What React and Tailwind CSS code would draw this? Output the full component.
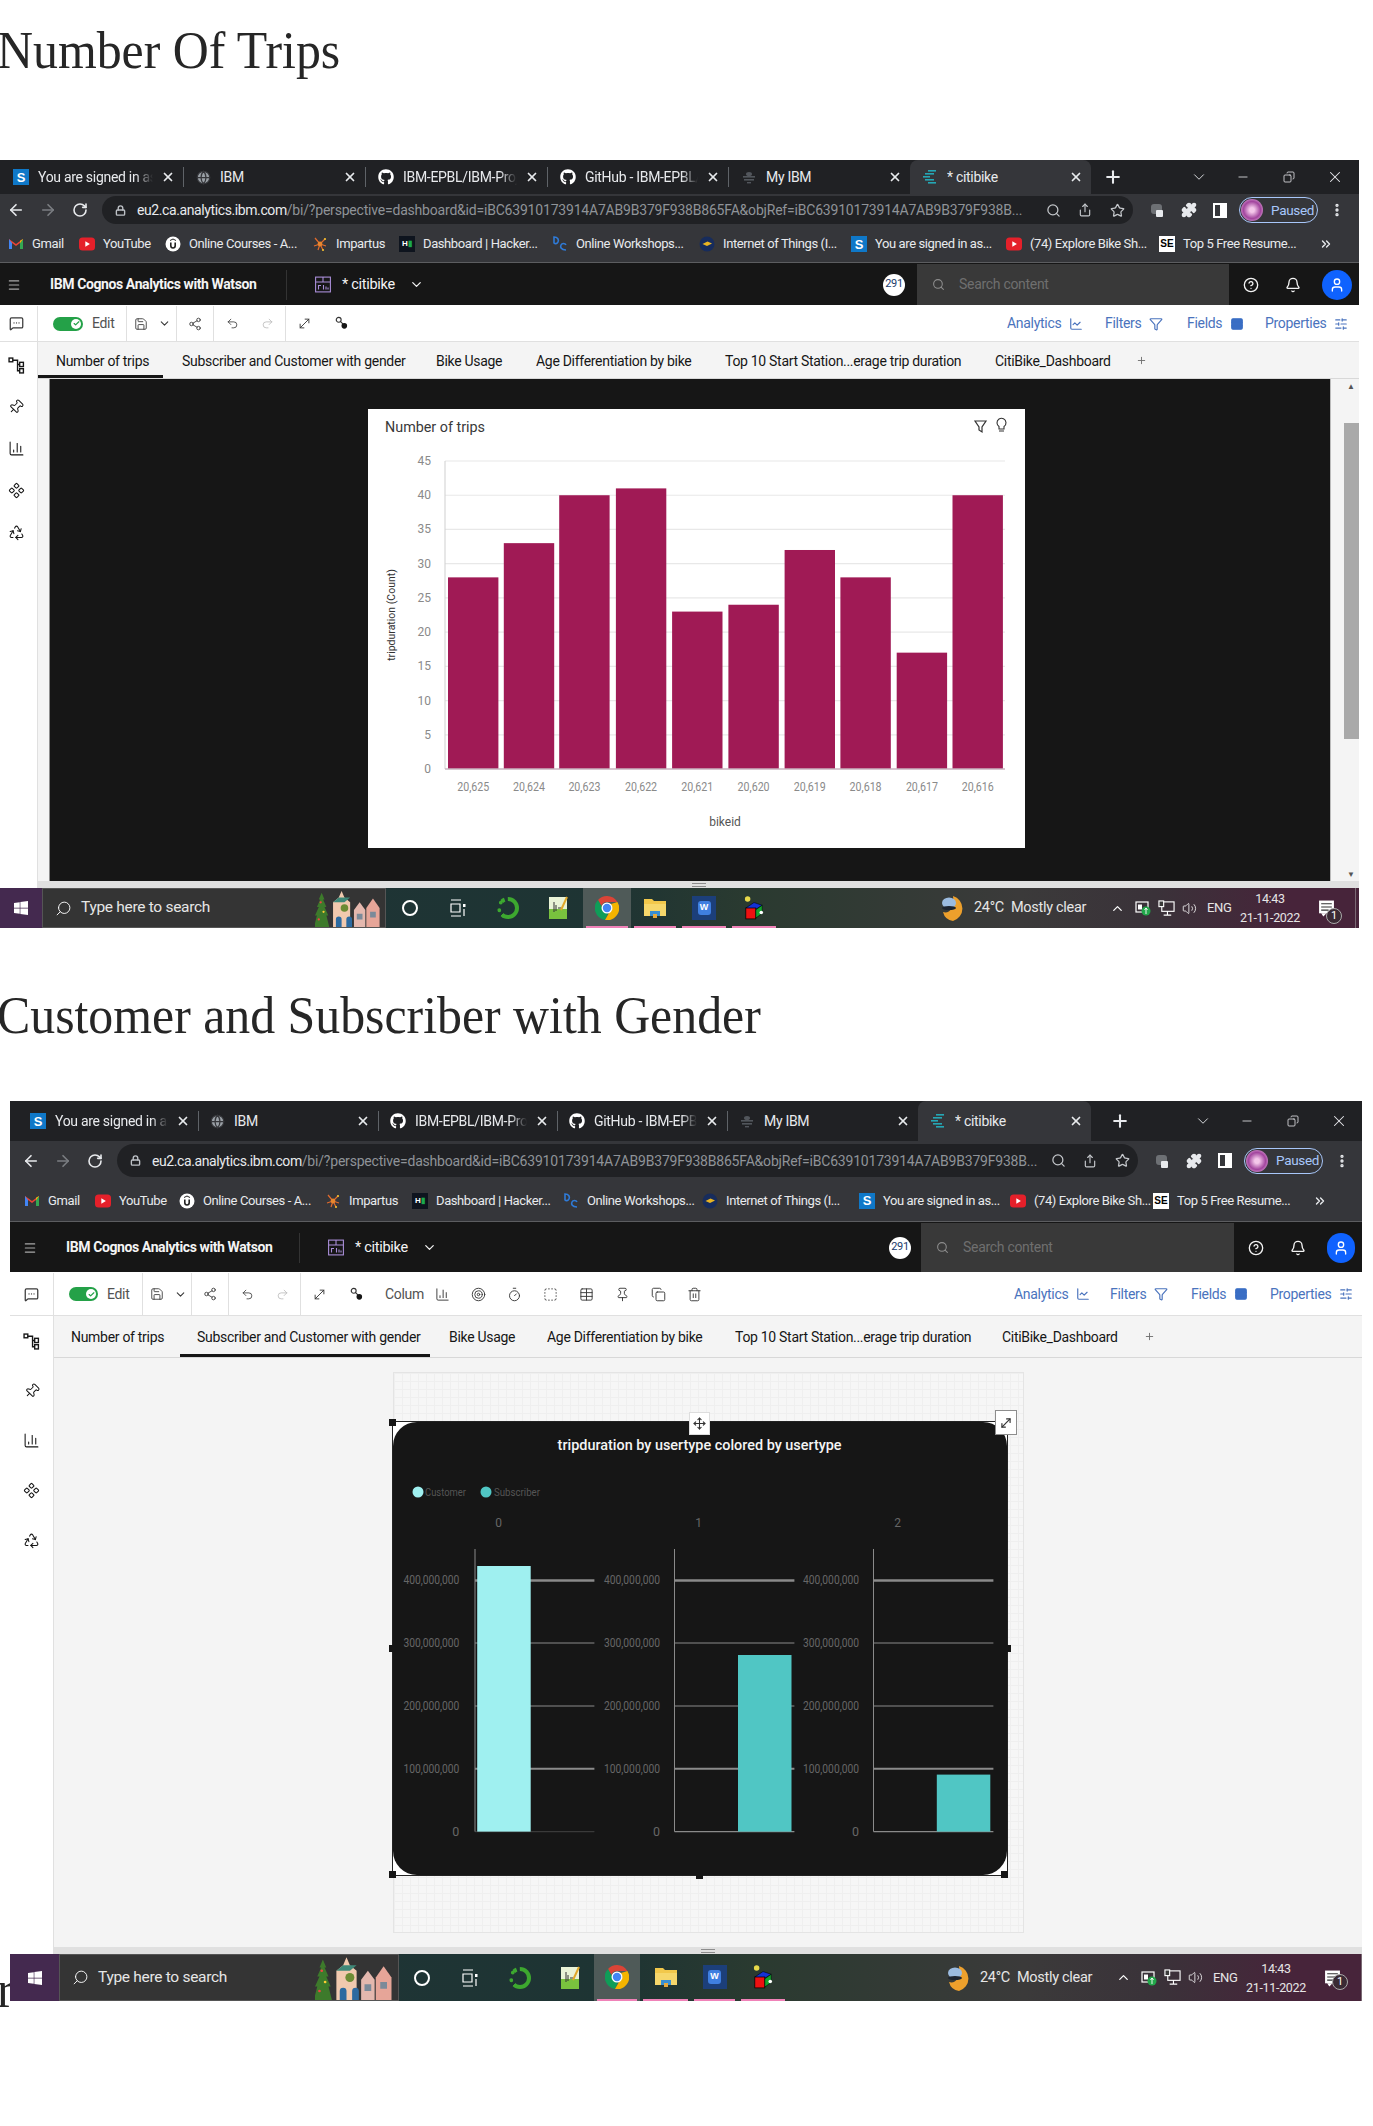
import React from "react";
import { ArrowLeft, ArrowRight, RotateCw, Lock, Search, Share, Star, Puzzle, MoreVertical, Menu, ChevronDown, ChevronUp, HelpCircle, Bell, User, MessageSquareMore, Save, Share2, Undo2, Redo2, MoveDiagonal, Pin, BarChart3, Component, Recycle, LineChart, Funnel, Rows3, SlidersHorizontal, Plus, X, Minus, Copy, Trash2, Table, BoxSelect, Target, Timer, Volume2, Move, Globe, ChevronsRight, Check } from "lucide-react";
import { FaGithub, FaWindows } from "react-icons/fa";

const ui = "font-['Roboto',sans-serif] tracking-[-0.3px]";

function Slot({ c = "", children }) {
  return <div className={`flex flex-none items-center ${c}`}>{children}</div>;
}

function SFav({ c = "" }) {
  return <span className={`flex h-4 w-4 flex-none items-center justify-center bg-[#0f78c8] text-[13px] font-bold leading-none text-white font-['Liberation_Sans',sans-serif] ${c}`}>S</span>;
}
function Yt() {
  return (
    <svg viewBox="0 0 16 16" className="h-4 w-4 flex-none">
      <rect x="0" y="1.5" width="16" height="13" rx="3.5" fill="#e5202a" />
      <path d="M6.3 5.2v5.6l4.6-2.8z" fill="#fff" />
    </svg>
  );
}
function Gmail() {
  return (
    <svg viewBox="0 0 16 16" className="h-4 w-4 flex-none">
      <path d="M1 3v10h3V7l4 3 4-3v6h3V3l-7 5z" fill="#ea4335" />
      <path d="M1 3v10h3V7z" fill="#4285f4" />
      <path d="M12 7v6h3V3z" fill="#34a853" />
      <path d="M12 4.8V7l3-4z" fill="#fbbc04" />
    </svg>
  );
}
function Udemy() {
  return (
    <svg viewBox="0 0 16 16" className="h-4 w-4 flex-none">
      <circle cx="8" cy="8" r="7.5" fill="#fff" />
      <path d="M5 6.5v3.3a3 3 0 0 0 6 0V6.5H9.4v3.3a1.4 1.4 0 0 1-2.8 0V6.5z" fill="#222" />
      <path d="M8 2.5l3 1.6v1L8 3.6 5 5.1v-1z" fill="#222" />
    </svg>
  );
}
function Impartus() {
  return (
    <svg viewBox="0 0 16 16" className="h-4 w-4 flex-none" stroke="#e26b2c" strokeWidth="1.2">
      <path d="M8 8L3 2M8 8l5-5M8 8L2 10M8 8l6 2M8 8l-2 6M8 8l3 6" />
      <circle cx="8" cy="8" r="2.4" fill="#e8862e" stroke="none" />
      <circle cx="13" cy="3" r="1.1" fill="#f4c030" stroke="none" />
      <circle cx="11" cy="14" r="1.1" fill="#f4c030" stroke="none" />
    </svg>
  );
}
function Hacker() {
  return (
    <span className="flex h-4 w-4 flex-none items-center justify-center bg-[#0e141e] text-[8px] font-bold leading-none text-white font-['Liberation_Sans',sans-serif]">H<span className="text-[#1ba94c]">▮</span></span>
  );
}
function Workshops() {
  return (
    <svg viewBox="0 0 16 16" className="h-4 w-4 flex-none" fill="none" strokeWidth="1.6">
      <path d="M2 1c4 0 5 3 4 5s-3 2-4 1z" stroke="#2f7bd8" />
      <path d="M14 9c-1-2-4-2-5 0s0 5 5 5" stroke="#2f7bd8" />
    </svg>
  );
}
function Iot() {
  return (
    <svg viewBox="0 0 16 16" className="h-4 w-4 flex-none">
      <circle cx="8" cy="8" r="7.5" fill="#172c5c" />
      <path d="M3.5 8l5-2.5 4.500 2-5 2.600z" fill="#e9b422" />
    </svg>
  );
}
function SE() {
  return <span className="flex h-4 w-4 flex-none items-center justify-center bg-white text-[10px] font-bold leading-none text-black font-['Liberation_Sans',sans-serif]">SE</span>;
}
function Citi() {
  return (
    <svg viewBox="0 0 16 16" className="h-4 w-4 flex-none" fill="#25a7b5">
      <rect x="6" y="1" width="8" height="1.6" />
      <rect x="3" y="4" width="9" height="1.6" />
      <rect x="1" y="7" width="7" height="1.6" />
      <rect x="3" y="10" width="9" height="1.6" />
      <rect x="6" y="13" width="8" height="1.6" />
    </svg>
  );
}
function Bee() {
  return (
    <svg viewBox="0 0 16 16" className="h-4 w-4 flex-none" fill="#52565c">
      <ellipse cx="8" cy="5" rx="3" ry="2" />
      <rect x="2" y="7" width="12" height="1.6" />
      <rect x="3" y="10" width="10" height="1.6" />
      <rect x="6" y="13" width="4" height="1.4" />
    </svg>
  );
}

function Tab({ w, pl, icon, label, active, sep = true, mask = true }) {
  return (
    <div className={`flex h-full flex-none items-center ${w} ${pl} ${active ? "rounded-t-lg bg-[#35363a]" : ""}`}>
      {icon}
      <span className={`ml-[9px] min-w-0 flex-1 overflow-hidden whitespace-nowrap text-[14px] text-[#e8eaed] ${ui} ${mask ? "[mask-image:linear-gradient(to_right,black_85%,transparent)]" : ""}`}>{label}</span>
      <Slot c="w-[30px] justify-center">
        <X size={14} strokeWidth={3} className="text-[#e8eaed]" />
      </Slot>
      {sep && <span className="h-[20px] w-px flex-none bg-[#5f6368]" />}
    </div>
  );
}

function ChromeTabs({ v }) {
  return (
    <div className={`flex flex-none items-end bg-[#202124] ${v.rows[0]}`}>
      <Tab w={v.tabs[0]} pl={v.tabPl0} icon={<SFav />} label="You are signed in as 1(" />
      <Tab w={v.tabs[1]} pl={v.tabPl} icon={<Globe size={15} className="flex-none fill-[#9aa0a6] text-[#35363a]" />} label="IBM" mask={false} />
      <Tab w={v.tabs[2]} pl={v.tabPl} icon={<FaGithub size={16} className="flex-none text-white" />} label="IBM-EPBL/IBM-Project-1" />
      <Tab w={v.tabs[3]} pl={v.tabPl} icon={<FaGithub size={16} className="flex-none text-white" />} label="GitHub - IBM-EPBL/IBM-Project" />
      <Tab w={v.tabs[4]} pl={v.tabPl} icon={<Bee />} label="My IBM" mask={false} sep={false} />
      <Tab w={v.tabs[5]} pl="pl-[12px]" icon={<Citi />} label="* citibike" mask={false} sep={false} active />
      <div className="flex h-full flex-1 items-center text-[#e8eaed]">
        <Slot c={`justify-center ${v.plus}`}><Plus size={20} strokeWidth={2.5} /></Slot>
        <Slot c={`justify-center ${v.ctrlGap}`}><ChevronDown size={18} strokeWidth={1.2} /></Slot>
        <Slot c="w-[44px] justify-center"><Minus size={14} strokeWidth={1.4} /></Slot>
        <Slot c="w-[48px] justify-center"><Copy size={12} strokeWidth={1.6} className="-scale-x-100" /></Slot>
        <Slot c="w-[44px] justify-center"><X size={18} strokeWidth={1.4} /></Slot>
      </div>
    </div>
  );
}

function AddressBar({ v }) {
  const ic = "text-[#c4c7cb]";
  return (
    <div className={`flex flex-none items-center bg-[#35363a] ${v.rows[1]} ${v.addrPl}`}>
      <Slot c="w-[32px] justify-center"><ArrowLeft size={18} strokeWidth={2.2} className="text-[#e8eaed]" /></Slot>
      <Slot c="w-[32px] justify-center"><ArrowRight size={18} strokeWidth={2.2} className="text-[#7b7e82]" /></Slot>
      <Slot c="w-[32px] justify-center"><RotateCw size={16} strokeWidth={2.4} className="text-[#e8eaed]" /></Slot>
      <div className={`ml-[6px] flex flex-none items-center rounded-full bg-[#202124] pl-[13px] ${v.pill} ${v.pillH}`}>
        <Lock size={11} strokeWidth={3} className="flex-none text-[#bdc1c6]" />
        <span className="ml-[11px] min-w-0 flex-1 overflow-hidden whitespace-nowrap pt-[1px] font-['Roboto',sans-serif] text-[14px] tracking-[-0.2px] text-[#8f9398]">
          <span className="tracking-[-0.4px] text-[#e8eaed]">eu2.ca.analytics.ibm.com</span>/bi/?perspective=dashboard&amp;id=iBC63910173914A7AB9B379F938B865FA&amp;objRef=iBC63910173914A7AB9B379F938B...
        </span>
        <Slot c="w-[32px] justify-center"><Search size={15} className={ic} /></Slot>
        <Slot c="w-[32px] justify-center"><Share size={14} className={ic} /></Slot>
        <Slot c="w-[32px] justify-center"><Star size={15} className={ic} /></Slot>
      </div>
      <Slot c="ml-[8px] w-[32px] justify-center">
        <svg viewBox="0 0 16 16" className="h-4 w-4"><rect x="2" y="2" width="11" height="10" rx="3" fill="#6d7074" /><rect x="7" y="8" width="7" height="7" rx="1" fill="#e8eaed" /></svg>
      </Slot>
      <Slot c="w-[31px] justify-center"><Puzzle size={16} className="fill-[#e8eaed] text-[#e8eaed]" /></Slot>
      <Slot c="w-[32px] justify-center"><span className="h-[15px] w-[14px] border-[2px] border-r-[7px] border-white" /></Slot>
      <div className="ml-[3px] flex h-[26px] w-[79px] flex-none items-center rounded-full border border-[#a8c7fa] pl-[1px]">
        <span className="h-[22px] w-[22px] flex-none rounded-full bg-[radial-gradient(circle,#f4c7ea_15%,#a2459e_55%,#e9b8e2_90%)]" />
        <span className={`ml-[8px] text-[13.5px] text-[#a8c7fa] ${ui}`}>Paused</span>
      </div>
      <Slot c="w-[38px] justify-center"><MoreVertical size={16} strokeWidth={3} className="text-[#e8eaed]" /></Slot>
    </div>
  );
}

function BM({ w, icon, label }) {
  return (
    <div className={`flex flex-none items-center gap-[8px] ${w}`}>
      {icon}
      <span className="whitespace-nowrap font-['Roboto',sans-serif] text-[13px] tracking-[-0.4px] text-[#e8eaed]">{label}</span>
    </div>
  );
}

function Bookmarks({ v }) {
  const b = v.bm;
  return (
    <div className={`flex flex-none items-center border-b border-[#5c5d60] bg-[#35363a] ${v.rows[2]} ${v.bmPl}`}>
      <BM w={b[0]} icon={<Gmail />} label="Gmail" />
      <BM w={b[1]} icon={<Yt />} label="YouTube" />
      <BM w={b[2]} icon={<Udemy />} label="Online Courses - A..." />
      <BM w={b[3]} icon={<Impartus />} label="Impartus" />
      <BM w={b[4]} icon={<Hacker />} label="Dashboard | Hacker..." />
      <BM w={b[5]} icon={<Workshops />} label="Online Workshops..." />
      <BM w={b[6]} icon={<Iot />} label="Internet of Things (I..." />
      <BM w={b[7]} icon={<SFav />} label="You are signed in as..." />
      <BM w={b[8]} icon={<Yt />} label="(74) Explore Bike Sh..." />
      <BM w={b[9]} icon={<SE />} label="Top 5 Free Resume..." />
      <Slot c="flex-1 justify-end pr-[12px]"><ChevronsRight size={14} strokeWidth={2.4} className="text-[#e8eaed]" /></Slot>
    </div>
  );
}

function BoardIcon() {
  return (
    <svg viewBox="0 0 16 16" className="h-[17px] w-[16px] flex-none" fill="none" stroke="#a98ed8" strokeWidth="1.1">
      <rect x="0.6" y="0.6" width="14.8" height="14.8" />
      <path d="M0.6 5.500h14.800M8 0.600v4.900M3.500 13V9h2.500M8.500 13V8.500M11 13v-3M13 13v-2" />
    </svg>
  );
}

function CognosHeader({ v }) {
  return (
    <div className={`flex flex-none items-center bg-[#161616] pt-[1px] ${v.rows[3]} ${v.hdrPl}`}>
      <Slot c="w-[28px] justify-center"><Menu size={14} className="text-[#a8a8a8]" /></Slot>
      <Slot c={`h-[30px] border-r border-[#333] pl-[22px] ${v.title}`}>
        <span className="whitespace-nowrap font-['Roboto',sans-serif] text-[14px] font-bold tracking-[-0.4px] text-[#f4f4f4]">IBM Cognos Analytics with Watson</span>
      </Slot>
      <Slot c="pl-[28px]"><BoardIcon /></Slot>
      <span className={`ml-[11px] whitespace-nowrap text-[14.5px] text-[#f4f4f4] ${ui}`}>* citibike</span>
      <Slot c="ml-[14px]"><ChevronDown size={15} strokeWidth={2} className="text-[#f4f4f4]" /></Slot>
      <div className="flex-1" />
      <span className={`flex h-[22px] w-[22px] flex-none items-center justify-center overflow-hidden rounded-full bg-white text-[11px] text-[#1a3a6b] ${ui}`}>291</span>
      <div className={`-mt-[1px] flex h-full flex-none items-center bg-[#393939] pl-[15px] ${v.search}`}>
        <Search size={13} className="text-[#8d8d8d]" />
        <span className={`ml-[14px] text-[14px] text-[#6f6f6f] ${ui}`}>Search content</span>
      </div>
      <Slot c="w-[43px] justify-center"><HelpCircle size={16} className="text-[#f4f4f4]" /></Slot>
      <Slot c="w-[42px] justify-center"><Bell size={16} className="text-[#f4f4f4]" /></Slot>
      <Slot c={`justify-center ${v.userSlot}`}>
        <span className={`flex items-center justify-center rounded-full bg-[#0f62fe] ${v.user}`}><User size={16} className="text-white" /></span>
      </Slot>
    </div>
  );
}

function Toggle({ c }) {
  return (
    <span className={`flex h-[14px] flex-none items-center justify-end rounded-full bg-[#24a148] pr-[2px] ${c}`}>
      <span className="flex h-[10px] w-[10px] items-center justify-center rounded-full bg-white">
        <Check size={7} strokeWidth={4} className="text-[#24a148]" />
      </span>
    </span>
  );
}

function RightTools({ v }) {
  const t = `text-[14px] text-[#4a73bd] ${ui}`;
  const ic = "text-[#4a73bd]";
  return (
    <div className="ml-auto flex h-full flex-none items-center">
      <Slot c={`gap-[8px] ${v.rt[0]}`}><span className={t}>Analytics</span><LineChart size={14} className={ic} /></Slot>
      <Slot c={`gap-[8px] ${v.rt[1]}`}><span className={t}>Filters</span><Funnel size={14} className={ic} /></Slot>
      <Slot c={`gap-[8px] ${v.rt[2]}`}><span className={t}>Fields</span><Rows3 size={14} className="fill-[#3a6ec4] text-[#3a6ec4]" /></Slot>
      <Slot c={`gap-[8px] ${v.rt[3]}`}><span className={t}>Properties</span><SlidersHorizontal size={14} className={ic} /></Slot>
    </div>
  );
}

function Toolbar({ v, extra }) {
  const ic = "text-[#393939]";
  return (
    <div className={`flex flex-none items-center border-b border-[#e0e0e0] bg-white pt-[1px] ${v.rows[4]}`}>
      <Slot c={`h-full justify-center border-r border-[#e0e0e0] ${v.rail} ${v.railPr}`}><MessageSquareMore size={15} className="text-[#393939]" /></Slot>
      <Slot c="h-full w-[89px] border-r border-[#e0e0e0] pl-[15px]">
        <Toggle c={v.toggle} />
        <span className={`ml-[9px] text-[14px] text-[#525252] ${ui}`}>Edit</span>
      </Slot>
      <Slot c={`h-full border-r border-[#e0e0e0] pl-[7px] ${v.save}`}>
        <Save size={14} strokeWidth={1.5} className={ic} />
        <ChevronDown size={13} className={`ml-[10px] ${ic}`} />
      </Slot>
      <Slot c="h-full w-[37px] justify-center border-r border-[#e0e0e0]"><Share2 size={14} strokeWidth={1.5} className={ic} /></Slot>
      <Slot c="h-full w-[36px] justify-center"><Undo2 size={13} strokeWidth={1.5} className={ic} /></Slot>
      <Slot c="h-full w-[36px] justify-center border-r border-[#e0e0e0]"><Redo2 size={13} strokeWidth={1.4} className="text-[#b5b5b5]" /></Slot>
      <Slot c="h-full w-[37px] justify-center"><MoveDiagonal size={15} strokeWidth={1.5} className={ic} /></Slot>
      <Slot c="h-full w-[36px] justify-center">
        <svg viewBox="0 0 16 16" className="h-[15px] w-[15px]"><circle cx="5" cy="4" r="2.6" fill="none" stroke="#333" strokeWidth="1.2" /><path d="M7 6l3 3" stroke="#333" strokeWidth="1.2" /><circle cx="11" cy="10.5" r="3" fill="#161616" /></svg>
      </Slot>
      {extra}
      <RightTools v={v} />
    </div>
  );
}

function ExtraTools() {
  const ic = "text-[#393939]";
  const items = [BarChart3, Target, Timer, BoxSelect, Table, Pin, Copy, Trash2];
  return (
    <>
      <span className={`ml-[11px] w-[39px] flex-none overflow-hidden whitespace-nowrap text-[14px] text-[#525252] ${ui}`}>Column</span>
      {items.map((I, i) => (
        <Slot key={i} c="h-full w-[36px] justify-center"><I size={15} strokeWidth={1.5} className={ic} /></Slot>
      ))}
    </>
  );
}

function TreeIcon() {
  return (
    <svg viewBox="0 0 16 16" className="h-[17px] w-[17px]" fill="none" stroke="#161616" strokeWidth="1.3">
      <rect x="1" y="1" width="3.500" height="3.500" />
      <path d="M4.500 3H9v10h2M9 7h2" />
      <rect x="11" y="5" width="3.500" height="4" />
      <rect x="11" y="11" width="3.500" height="4" />
    </svg>
  );
}

function Rail({ v }) {
  const c = "text-[#161616]";
  return (
    <div className={`flex flex-none flex-col items-center border-r border-[#e0e0e0] bg-white ${v.rail} ${v.railCol} ${v.railPr}`}>
      <TreeIcon />
      <Pin size={16} strokeWidth={1.5} className={`rotate-45 ${c}`} />
      <BarChart3 size={17} strokeWidth={1.5} className={c} />
      <Component size={17} strokeWidth={1.5} className={c} />
      <Recycle size={17} strokeWidth={1.5} className={c} />
    </div>
  );
}

function BoardTabs({ v }) {
  const names = ["Number of trips", "Subscriber and Customer with gender", "Bike Usage", "Age Differentiation by bike", "Top 10 Start Station...erage trip duration", "CitiBike_Dashboard"];
  return (
    <div className={`flex flex-none items-stretch border-b border-[#d8d8d8] bg-[#f4f4f4] ${v.rows[5]}`}>
      {names.map((n, i) => (
        <div key={n} className={`flex flex-none items-center pl-[17px] pt-[2px] ${v.bt[i]} ${i === v.activeTab ? "shadow-[inset_0_-3px_0_#161616]" : ""}`}>
          <span className={`whitespace-nowrap text-[14px] text-[#161616] ${ui}`}>{n}</span>
        </div>
      ))}
      <Slot c="ml-[9px]"><Plus size={11} className="text-[#6f6f6f]" /></Slot>
    </div>
  );
}

function Strip() {
  return (
    <div className="flex h-[7px] flex-none items-center justify-center bg-[#e0e0e0]">
      <span className="h-[4px] w-[14px] border-y border-[#8d8d8d]" />
    </div>
  );
}

function Tree() {
  return (
    <svg viewBox="0 0 74 40" className="h-full flex-none" preserveAspectRatio="xMidYMax meet">
      <path d="M7 4l3 7h-1.500l3.500 8h-2l4 9h-2l3 12H-1l3-12H0l4-9H2l3.500-8H4z" fill="#3d7a2b" />
      <circle cx="6" cy="14" r="1.200" fill="#e44" /><circle cx="9" cy="24" r="1.200" fill="#fc3" /><circle cx="4" cy="32" r="1.200" fill="#e44" />
      <path d="M19 40V14l6-5 3-7 3 7 6 5v26z" fill="#f1c9ae" />
      <path d="M19 14l6-5h12l-6 5z" fill="#3f8878" />
      <circle cx="31" cy="20" r="4" fill="#6d8c34" />
      <path d="M22 40v-8a3 3 0 0 1 6 0v8zM33 40v-8a3 3 0 0 1 6 0v8z" fill="#2c6aa0" />
      <path d="M41 40V22l6-8 6 8v18z" fill="#e4b8ae" />
      <path d="M54 40V20l7-10 7 10v20z" fill="#e6a598" />
      <path d="M44 26h6v6h-6zM58 24h6v6h-6z" fill="#7b8a99" />
    </svg>
  );
}

function TbIcon({ kind }) {
  if (kind === "cortana") return <span className="h-[16px] w-[16px] rounded-full border-[2.5px] border-white" />;
  if (kind === "task")
    return (
      <svg viewBox="0 0 16 18" className="h-[18px] w-[16px]" fill="none" stroke="#fff" strokeWidth="1.200">
        <path d="M1 1h10M1 17h10M1 5h9v8H1z" /><rect x="13" y="5" width="2.500" height="3" fill="#fff" stroke="none" /><path d="M14 10v7" />
      </svg>
    );
  if (kind === "ring")
    return <span className="h-[22px] w-[22px] rounded-full border-[4px] border-[#3da82f] [border-style:dashed_solid_solid_dotted]" />;
  if (kind === "note")
    return (
      <svg viewBox="0 0 20 24" className="h-[24px] w-[20px]">
        <rect x="1" y="1" width="18" height="22" fill="#e9f3d6" /><rect x="1" y="13" width="18" height="10" fill="#79c23e" />
        <path d="M6 6v10M8 9v6M10 12h3" stroke="#333" strokeWidth="1" /><path d="M19 1l-6 13" stroke="#e0a82a" strokeWidth="2" />
      </svg>
    );
  if (kind === "chrome")
    return (
      <svg viewBox="0 0 24 24" className="h-[24px] w-[24px]">
        <path d="M12 0a12 12 0 0 1 10.400 6H12a6 6 0 0 0-5.700 4L3 4a12 12 0 0 1 9-4z" fill="#db4437" />
        <path d="M3 4l5 9a5 5 0 0 0 5 4l-3 7A12 12 0 0 1 3 4z" fill="#0f9d58" />
        <path d="M22.400 6A12 12 0 0 1 10 24l4-7a6 6 0 0 0 2-9z" fill="#f4b400" />
        <circle cx="12" cy="12" r="5.500" fill="#fff" /><circle cx="12" cy="12" r="4.200" fill="#4285f4" />
      </svg>
    );
  if (kind === "folder")
    return (
      <svg viewBox="0 0 22 24" className="h-[24px] w-[22px]">
        <path d="M0 3h8l2 2h12v15H0z" fill="#f2c84b" /><rect x="0" y="8" width="22" height="12" fill="#f6d76b" /><path d="M6 20v-5h10v5z" fill="#3a8fd1" /><rect x="9" y="18" width="4" height="4" fill="#e9a93a" />
      </svg>
    );
  if (kind === "word")
    return (
      <span className="flex h-[24px] w-[24px] items-center justify-center bg-[#1c3f7a]">
        <span className="flex h-[14px] w-[13px] items-center justify-center rounded-[3px] bg-[#3f7fe0] text-[9px] font-bold text-white font-['Liberation_Sans',sans-serif]">W</span>
      </span>
    );
  return (
    <svg viewBox="0 0 22 28" className="h-[26px] w-[20px]">
      <circle cx="4" cy="4" r="3" fill="#e8d94a" />
      <path d="M2 14l9-6 9 3-8 5z" fill="#1432d6" stroke="#000" strokeWidth="0.600" />
      <rect x="2" y="14" width="11" height="12" fill="#ee1111" stroke="#000" strokeWidth="0.800" />
      <path d="M13 16l7-5v9l-7 5z" fill="#12a52e" stroke="#000" strokeWidth="0.600" />
      <circle cx="19" cy="19" r="2" fill="#fff" />
    </svg>
  );
}

function Weather() {
  return (
    <svg viewBox="0 0 22 28" className="h-[28px] w-[22px]">
      <path d="M12 2a13 13 0 0 1 0 25A12 12 0 0 1 2 18c5 2 12-2 10-16z" fill="#eda02c" />
      <ellipse cx="8" cy="9" rx="7" ry="5.500" fill="#9bbbe0" />
      <ellipse cx="8" cy="14" rx="7" ry="2" fill="#1d2430" />
    </svg>
  );
}

function TrayBattery() {
  return (
    <svg viewBox="0 0 16 16" className="h-[16px] w-[16px]">
      <rect x="1" y="2" width="12" height="10" fill="none" stroke="#fff" strokeWidth="1.200" />
      <rect x="3" y="4.500" width="4" height="5" fill="#fff" />
      <circle cx="11" cy="11" r="4.500" fill="#22a84a" />
      <path d="M11 8v6M9.500 10l1.500-2 1.500 2" stroke="#fff" strokeWidth="0.900" fill="none" />
    </svg>
  );
}

function TrayNet() {
  return (
    <svg viewBox="0 0 18 18" className="h-[17px] w-[17px]" fill="none" stroke="#fff" strokeWidth="1.200">
      <rect x="4" y="2" width="13" height="10" />
      <rect x="1" y="1" width="5" height="6" fill="#3a3a3a" />
      <path d="M10 12v4M6 16h8" />
    </svg>
  );
}

function Notif() {
  return (
    <svg viewBox="0 0 16 16" className="h-[18px] w-[17px]">
      <rect x="1" y="1" width="14" height="12" fill="#fff" />
      <path d="M3 4h10M3 7h10M3 10h7" stroke="#333" strokeWidth="1" />
      <path d="M3 13h5l-3 3z" fill="#fff" />
    </svg>
  );
}

function Taskbar({ v }) {
  const kinds = ["cortana", "task", "ring", "note", "chrome", "folder", "word", "cube"];
  const t = `whitespace-nowrap text-[#e6e6e6] ${ui}`;
  return (
    <div className={`flex flex-none items-stretch bg-[linear-gradient(to_right,#1f3437_0%,#1e3433_45%,#2a3a30_55%,#3b3a3a_75%,#3a3239_85%,#47243a_95%,#47243a_100%)] ${v.rows[6]}`}>
      <Slot c={`justify-center bg-[#44294f] ${v.start}`}><FaWindows size={16} className="text-white" /></Slot>
      <div className={`flex flex-none items-center border border-[#555] bg-[#343434] pl-[12px] ${v.tsearch}`}>
        <Search size={17} strokeWidth={1.3} className="-scale-x-100 text-white" />
        <span className={`ml-[9px] text-[15.5px] ${t}`}>Type here to search</span>
        <div className="ml-auto h-full"><Tree /></div>
      </div>
      {kinds.map((k, i) => (
        <div key={k} className={`relative flex flex-none items-center justify-center ${v.tb[i]} ${k === "chrome" ? "bg-[#4f5a58]" : ""} ${i >= 4 ? "pb-[1px]" : ""}`}>
          <TbIcon kind={k} />
          {i >= 4 && <span className="absolute inset-x-[3px] bottom-0 h-[2px] bg-[#f082b8]" />}
        </div>
      ))}
      <div className="flex-1" />
      <Slot c="w-[33px]"><Weather /></Slot>
      <Slot c={`w-[37px] text-[14.5px] ${t}`}>24°C</Slot>
      <Slot c={`w-[92px] text-[14.5px] ${t}`}>Mostly clear</Slot>
      <Slot c="w-[28px] justify-center"><ChevronUp size={15} className="text-white" /></Slot>
      <Slot c="w-[23px] justify-center"><TrayBattery /></Slot>
      <Slot c="w-[24px] justify-center"><TrayNet /></Slot>
      <Slot c="w-[22px] justify-center"><Volume2 size={15} strokeWidth={1.3} className="text-white" /></Slot>
      <Slot c={`ml-[7px] w-[30px] text-[13px] ${t}`}>ENG</Slot>
      <div className={`flex w-[66px] flex-none flex-col items-center justify-center text-[12.5px] leading-[19px] ${t}`}>
        <span>14:43</span>
        <span>21-11-2022</span>
      </div>
      <div className="relative flex w-[52px] flex-none items-center justify-center pr-[6px]">
        <Notif />
        <span className={`absolute left-[23px] top-[20px] flex h-[16px] w-[16px] items-center justify-center rounded-full border border-[#aaa] bg-[#3a2a34] text-[11px] text-white ${ui}`}>1</span>
      </div>
      <div className={`flex-none border-l border-[#7a6a74] ${v.tbEnd}`} />
    </div>
  );
}

function TripsChart() {
  const vals = [28, 33, 40, 41, 23, 24, 32, 28, 17, 40];
  const xs = [80, 135.8, 191.2, 247.9, 304.1, 360.4, 416.6, 472.4, 528.7, 584.5];
  const ids = [20625, 20624, 20623, 20622, 20621, 20620, 20619, 20618, 20617, 20616];
  const ticks = [45, 40, 35, 30, 25, 20, 15, 10, 5, 0];
  const y = (n) => 360 - n * 6.844;
  const font = "Roboto,sans-serif";
  return (
    <svg viewBox="0 0 657 439" className="h-[439px] w-[657px] bg-white">
      <text x="17" y="23" fontSize="14" fill="#393939" fontFamily={font} textLength="100" lengthAdjust="spacingAndGlyphs">Number of trips</text>
      <g transform="translate(6 0)">
        <path d="M601 12h11l-4 6v5l-3-2v-3z" fill="none" stroke="#333" strokeWidth="1.200" />
      </g>
      <g transform="translate(9 0)">
        <path d="M622 22h5M620 14a4.500 4.500 0 1 1 7 3.500v2.500h-5v-2.500a4.500 4.500 0 0 1-2-3.500z" fill="none" stroke="#333" strokeWidth="1.100" />
      </g>
      {ticks.map((t) => (
        <g key={t}>
          {t > 0 && <line x1="77" x2="637" y1={y(t)} y2={y(t)} stroke="#e8e8e8" strokeWidth="1.200" />}
          <text x="63" y={y(t) + 4} fontSize="12" textAnchor="end" fill="#8a8a8a" fontFamily={font}>{t}</text>
        </g>
      ))}
      <line x1="77" x2="77" y1="52" y2="360" stroke="#cfcfcf" />
      {vals.map((v, i) => (
        <g key={i}>
          <rect x={xs[i]} y={y(v)} width="50.4" height={360 - y(v)} fill="#a01a55" />
          <text x={xs[i] + 25.2} y="382" fontSize="12" textAnchor="middle" fill="#8a8a8a" fontFamily={font} textLength="32" lengthAdjust="spacingAndGlyphs">{ids[i].toLocaleString("en-US")}</text>
        </g>
      ))}
      <line x1="77" x2="637" y1="360" y2="360" stroke="#c9b3bf" strokeWidth="1.500" />
      <text x="357" y="417" fontSize="12" textAnchor="middle" fill="#555" fontFamily={font}>bikeid</text>
      <text transform="translate(27 206) rotate(-90)" fontSize="10.500" textAnchor="middle" fill="#333" fontFamily={font}>tripduration (Count)</text>
    </svg>
  );
}

function UserChart() {
  const facets = [
    { ax: 82, end: 201.4, lab: 66.4, head: 105.5, n: "0", bx: 84.2, top: 144, col: "#9ff0f0" },
    { ax: 281.5, end: 401.4, lab: 267, head: 305.5, n: "1", bx: 345, top: 233, col: "#50c6c4" },
    { ax: 480.5, end: 600.4, lab: 466, head: 504.5, n: "2", bx: 543.8, top: 352.6, col: "#50c6c4" },
  ];
  const grid = [
    { y: 158.4, t: "400,000,000", w: 2.5 },
    { y: 221, t: "300,000,000", w: 1.2 },
    { y: 284, t: "200,000,000", w: 1 },
    { y: 346.7, t: "100,000,000", w: 2 },
    { y: 409.6, t: "0", w: 1.2 },
  ];
  const font = "Roboto,sans-serif";
  return (
    <svg viewBox="0 0 614 453" className="h-[453px] w-[614px]">
      <text x="306.6" y="28" fontSize="14.500" fontWeight="500" textAnchor="middle" fill="#f4f4f4" fontFamily={font} textLength="284" lengthAdjust="spacingAndGlyphs">tripduration by usertype colored by usertype</text>
      <circle cx="25" cy="70" r="5.500" fill="#9ff0f0" />
      <text x="32" y="74" fontSize="11" fill="#555" fontFamily={font} textLength="41" lengthAdjust="spacingAndGlyphs">Customer</text>
      <circle cx="93" cy="70" r="5.500" fill="#50c6c4" />
      <text x="101" y="74" fontSize="11" fill="#555" fontFamily={font} textLength="46" lengthAdjust="spacingAndGlyphs">Subscriber</text>
      {facets.map((f, fi) => (
        <g key={f.n}>
          <text x={f.head} y="105" fontSize="12" textAnchor="middle" fill="#666" fontFamily={font}>{f.n}</text>
          {grid.map((g) => (
            <g key={g.t}>
              <line x1={f.ax} x2={f.end} y1={g.y} y2={g.y} stroke={g.t === "0" && fi === 0 ? "#3a3a3a" : "#8a8a8a"} strokeWidth={g.w} />
              <text x={f.lab} y={g.y + 4} fontSize="12.500" textAnchor="end" fill="#666" fontFamily={font} {...(g.t === "0" ? {} : { textLength: 56, lengthAdjust: "spacingAndGlyphs" })}>{g.t}</text>
            </g>
          ))}
          <line x1={f.ax} x2={f.ax} y1="127" y2="409.6" stroke="#8a8a8a" />
          <rect x={f.bx} y={f.top} width="53.5" height={409.6 - f.top} fill={f.col} />
        </g>
      ))}
    </svg>
  );
}

function Handle({ c }) {
  return <span className={`absolute h-[7px] w-[7px] bg-[#161616] ${c}`} />;
}

function Canvas2() {
  return (
    <div className="flex min-h-0 min-w-0 flex-1 bg-[#f4f4f4] pl-[339px] pt-[14px]">
      <div className="h-[561px] w-[631px] flex-none border border-[#e4e4e4] bg-[#f6f6f6] pt-[49px] [background-image:linear-gradient(#efefef_1px,transparent_1px),linear-gradient(90deg,#efefef_1px,transparent_1px)] [background-size:8px_8px]">
        <div className="relative -ml-[1px] h-[453px] w-[614px] bg-white ring-1 ring-[#222]">
          <div className="h-full w-full rounded-[24px] bg-[#161616]"><UserChart /></div>
          <Handle c="-left-[4px] -top-[3px]" />
          <Handle c="-bottom-[3px] -left-[4px]" />
          <Handle c="-bottom-[3px] -right-[1px]" />
          <Handle c="-left-[4px] top-[223px]" />
          <Handle c="-right-[4px] top-[223px]" />
          <Handle c="-bottom-[4px] left-[303px]" />
          <span className="absolute -top-[10px] left-[296px] flex h-[23px] w-[21px] items-center justify-center border border-[#ddd] bg-white"><Move size={13} className="text-[#333]" /></span>
          <span className="absolute -right-[10px] -top-[12px] flex h-[25px] w-[22px] items-center justify-center border border-[#8d8d8d] bg-white"><MoveDiagonal size={14} className="text-[#333]" /></span>
        </div>
      </div>
    </div>
  );
}

function Panel1() {
  return (
    <div className="flex min-h-0 flex-1 bg-[#f4f4f4] pl-[11px]">
      <div className="min-w-0 flex-1 border-l border-[#8d8d8d] bg-[#161616] pl-[318px] pt-[30px]"><TripsChart /></div>
      <div className="flex w-[29px] flex-none flex-col items-end border-l border-[#bbb] bg-[#f4f4f4]">
        <span className="flex h-[44px] w-[16px] items-start justify-center pt-[3px] text-[8px] leading-none text-[#555]">▲</span>
        <span className="h-[316px] w-[15px] bg-[#a9a9a9]" />
        <span className="mt-auto flex w-[16px] justify-center pb-[3px] text-[8px] leading-none text-[#555]">▼</span>
      </div>
    </div>
  );
}

const W1 = {
  frame: "w-[1359px]",
  rows: ["h-[34px]", "h-[32px]", "h-[37px]", "h-[42px]", "h-[37px]", "h-[37px]", "h-[40px]"],
  tabs: ["w-[184px]", "w-[182px]", "w-[182px]", "w-[181px]", "w-[181px]", "w-[181px]"],
  tabPl0: "pl-[13px]", tabPl: "pl-[12px]",
  plus: "w-[44px]", ctrlGap: "ml-[42px] w-[44px]",
  addrPl: "pl-0", pill: "w-[1031px]", pillH: "h-[28px]",
  bmPl: "pl-[8px]",
  bm: ["w-[71px]", "w-[86px]", "w-[147px]", "w-[87px]", "w-[153px]", "w-[147px]", "w-[152px]", "w-[155px]", "w-[153px]", "w-[160px]"],
  hdrPl: "pl-0", title: "w-[259px]", search: "ml-[12px] w-[312px]", user: "h-[30px] w-[30px]", userSlot: "w-[45px]",
  rail: "w-[38px]", railPr: "pr-[5px]", railCol: "gap-[25px] pt-[15px]", toggle: "w-[30px]", save: "w-[50px]",
  rt: ["w-[98px]", "w-[82px]", "w-[78px]", "w-[94px]"],
  bt: ["w-[125px] pl-[18px]", "w-[256px] pl-[19px]", "w-[99px]", "w-[189px] pl-[18px]", "w-[270px] pl-[18px]", "w-[150px] pl-[18px]"],
  activeTab: 0,
  start: "w-[42px]", tsearch: "w-[344px]",
  tb: ["w-[48px]", "w-[48px]", "w-[51px]", "w-[50px]", "w-[48px]", "w-[48px]", "w-[50px]", "w-[50px]"],
  tbEnd: "w-[4px]",
};

const W2 = {
  frame: "w-[1352px]",
  rows: ["h-[40px]", "h-[39px]", "h-[42px]", "h-[50px]", "h-[44px]", "h-[42px]", "h-[47px]"],
  tabs: ["w-[189px]", "w-[180px]", "w-[179px]", "w-[170px]", "w-[190px]", "w-[173px]"],
  tabPl0: "pl-[20px]", tabPl: "pl-[11px]",
  plus: "w-[58px]", ctrlGap: "ml-[32px] w-[44px]",
  addrPl: "pl-[5px]", pill: "w-[1021px]", pillH: "h-[33px]",
  bmPl: "pl-[14px]",
  bm: ["w-[71px]", "w-[84px]", "w-[146px]", "w-[87px]", "w-[151px]", "w-[139px]", "w-[157px]", "w-[151px]", "w-[143px]", "w-[160px]"],
  hdrPl: "pl-[6px]", title: "w-[256px]", search: "ml-[10px] w-[313px]", user: "h-[30px] w-[28px]", userSlot: "w-[43px]",
  rail: "w-[44px]", railPr: "pr-0", railCol: "gap-[33px] pt-[17px]", toggle: "w-[29px]", save: "w-[49px]",
  rt: ["w-[96px]", "w-[81px]", "w-[79px]", "w-[92px]"],
  bt: ["w-[126px]", "w-[250px] pl-[16px]", "w-[100px] pl-[19px]", "w-[188px]", "w-[267px]", "w-[150px]"],
  activeTab: 1,
  start: "w-[49px]", tsearch: "w-[340px]",
  tb: ["w-[46px]", "w-[49px]", "w-[51px]", "w-[49px]", "w-[46px]", "w-[51px]", "w-[47px]", "w-[50px]"],
  tbEnd: "w-0",
};

function Browser({ v, extra, content, contentH }) {
  return (
    <div className={`relative z-10 flex flex-none flex-col overflow-hidden ${v.frame}`}>
      <ChromeTabs v={v} />
      <AddressBar v={v} />
      <Bookmarks v={v} />
      <CognosHeader v={v} />
      <Toolbar v={v} extra={extra} />
      <div className={`flex flex-none ${contentH}`}>
        <Rail v={v} />
        <div className="flex min-w-0 flex-1 flex-col">
          <BoardTabs v={v} />
          {content}
          <Strip />
        </div>
      </div>
      <Taskbar v={v} />
    </div>
  );
}

const serif = "font-['Liberation_Serif',serif] text-[#262626]";

export default function App() {
  return (
    <div className="h-[2126px] w-[1373px] overflow-hidden bg-white">
      <div className="flex h-[160px] flex-none items-start pt-[15px]">
        <h1 className={`-ml-[3px] origin-left scale-x-[0.94] whitespace-nowrap text-[53px] font-normal leading-[70px] ${serif}`}>Number Of Trips</h1>
      </div>
      <Browser v={W1} content={<Panel1 />} contentH="h-[546px]" />
      <div className="flex h-[173px] items-start pt-[52px]">
        <h2 className={`-ml-[3px] origin-left scale-x-[0.94] whitespace-nowrap text-[53px] font-normal leading-[70px] ${serif}`}>Customer and Subscriber with Gender</h2>
      </div>
      <div className="flex">
        <div className="-mb-[6px] flex h-[30px] w-[10px] flex-none items-end self-end overflow-hidden">
          <span className={`-ml-[3px] origin-left scale-x-[0.94] text-[53px] leading-[36px] ${serif}`}>r</span>
        </div>
        <Browser v={W2} extra={<ExtraTools />} content={<Canvas2 />} contentH="h-[638px]" />
      </div>
    </div>
  );
}
